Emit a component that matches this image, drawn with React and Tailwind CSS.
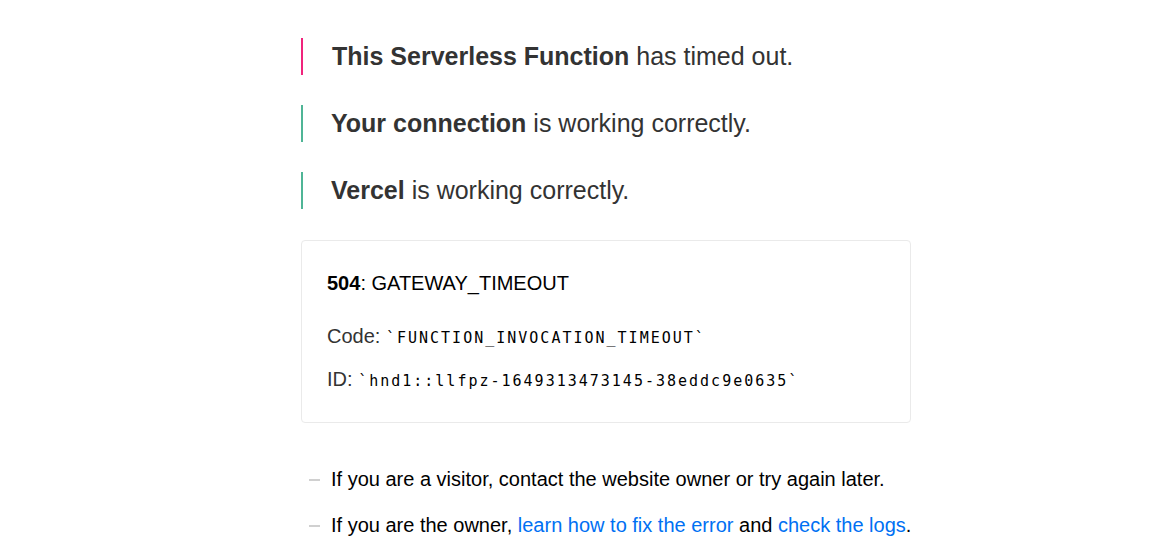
const headings = [
  { bold: "This Serverless Function", rest: " has timed out.", color: "border-[#f0247c]", pad: "pl-[29px]" },
  { bold: "Your connection", rest: " is working correctly.", color: "border-[#4fb596]", pad: "pl-[28px]" },
  { bold: "Vercel", rest: " is working correctly.", color: "border-[#4fb596]", pad: "pl-[28px]" },
];

const App = () => {
  return (
    <div className="min-h-screen bg-white font-['Liberation_Sans',Arial,sans-serif]">
      <div className="mx-auto w-[651px] pl-10 pt-[38px]">
        <div className="w-[610px]">
          <div className="flex flex-col gap-[30px]">
            {headings.map((h) => (
              <h1
                key={h.bold}
                className={`border-l-2 ${h.color} ${h.pad} text-[25px] leading-[37px] text-[#333] font-normal`}
              >
                <strong className="font-bold">{h.bold}</strong>
                {h.rest}
              </h1>
            ))}
          </div>

          <div className="mt-[31px] rounded border border-[#eaeaea] pl-[25px] pr-6 pt-[30px] pb-[27px] text-black">
            <p className="text-[20px] leading-6">
              <strong className="font-bold">504</strong>: GATEWAY_TIMEOUT
            </p>
            <p className="mt-[28px] text-[20px] leading-[27px] text-[#333]">
              Code:{" "}
              <code className="font-['DejaVu_Sans_Mono',monospace] text-[15px] tracking-[2px] text-black">
                `FUNCTION_INVOCATION_TIMEOUT`
              </code>
            </p>
            <p className="mt-[14px] text-[20px] leading-[27px] text-[#333]">
              ID:{" "}
              <code className="font-['DejaVu_Sans_Mono',monospace] text-[15px] tracking-[2px] text-black">
                `hnd1::llfpz-1649313473145-38eddc9e0635`
              </code>
            </p>
          </div>

          <ul className="mt-[43px] flex flex-col gap-[19px] text-[20px] leading-[27px] text-black whitespace-nowrap">
            <li className="flex items-center">
              <span className="ml-[8px] mr-[11px] h-[2px] w-[11px] shrink-0 bg-[#d0d0d0]" />
              <span>If you are a visitor, contact the website owner or try again later.</span>
            </li>
            <li className="flex items-center">
              <span className="ml-[8px] mr-[11px] h-[2px] w-[11px] shrink-0 bg-[#d0d0d0]" />
              <span>
                If you are the owner,{" "}
                <a href="#" className="text-[#0070f3]">learn how to fix the error</a> and{" "}
                <a href="#" className="text-[#0070f3]">check the logs</a>.
              </span>
            </li>
          </ul>
        </div>
      </div>
    </div>
  );
};

export default App;
